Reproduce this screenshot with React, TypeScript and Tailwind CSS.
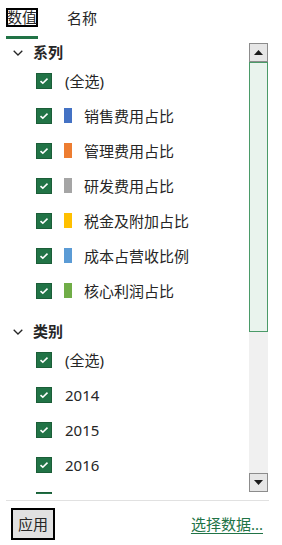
import React from 'react';

interface Item {
  label: string;
  color?: string;
}

const SERIES: Item[] = [
  { label: '(全选)' },
  { label: '销售费用占比', color: 'bg-[#4472c4]' },
  { label: '管理费用占比', color: 'bg-[#ed7d31]' },
  { label: '研发费用占比', color: 'bg-[#a5a5a5]' },
  { label: '税金及附加占比', color: 'bg-[#ffc000]' },
  { label: '成本占营收比例', color: 'bg-[#5b9bd5]' },
  { label: '核心利润占比', color: 'bg-[#70ad47]' },
];

// last row is scrolled mostly out of view; only its checkbox top peeks in
const CATEGORIES: Item[] = [
  { label: '(全选)' },
  { label: '2014' },
  { label: '2015' },
  { label: '2016' },
  { label: '' },
];

function Checkbox() {
  return (
    <span className="flex-shrink-0 w-4 h-4 bg-[#217346] border border-[#1b5e38] flex items-center justify-center">
      <svg width="10" height="8" viewBox="0 0 10 8">
        <path d="M1.5 4.2 L3.8 6.2 L8.5 1.6" fill="none" stroke="white" strokeWidth="1.6" />
      </svg>
    </span>
  );
}

function GroupHeader({ title }: { title: string }) {
  return (
    <div className="h-[21px] flex items-center pl-[13px] gap-[10px]">
      <svg width="10" height="6" viewBox="0 0 10 6">
        <path d="M0.7 0.7 L5 5 L9.3 0.7" fill="none" stroke="#262626" strokeWidth="1.3" />
      </svg>
      <span className="text-[15px] leading-[21px] font-bold text-[#262626]">{title}</span>
    </div>
  );
}

function Row({ item }: { item: Item }) {
  return (
    <div className="h-[35px] flex items-center pl-[36px]">
      <Checkbox />
      {item.color ? (
        <>
          <span className={`ml-[12px] w-[8px] h-[15px] flex-shrink-0 ${item.color}`} />
          <span className="ml-[12px] text-[15px] leading-[20px] text-[#262626] whitespace-nowrap">{item.label}</span>
        </>
      ) : (
        item.label && (
          <span className="ml-[13px] text-[15px] leading-[20px] text-[#262626] whitespace-nowrap">{item.label}</span>
        )
      )}
    </div>
  );
}

export default function App() {
  return (
    <div
      className="w-[282px] h-[545px] bg-white flex flex-col overflow-hidden"
      style={{ fontFamily: '"Noto Sans", "Noto Sans CJK SC", sans-serif' }}
    >
      {/* Tabs */}
      <div className="h-[42px] flex items-start pl-[6px] pt-[8px]">
        <div className="flex flex-col w-[32px]">
          <div className="h-[19px] border-2 border-black flex items-center justify-center overflow-visible">
            <span className="text-[15px] leading-[15px] text-[#262626] whitespace-nowrap">数值</span>
          </div>
          <div className="mt-[9px] h-[3px] bg-[#217346]" />
        </div>
        <span className="ml-[29px] mt-[2px] text-[15px] leading-[17px] text-[#262626] whitespace-nowrap">名称</span>
      </div>

      {/* List + scrollbar */}
      <div className="h-[452px] flex">
        <div className="flex-1 overflow-hidden">
          <GroupHeader title="系列" />
          {SERIES.map((it, i) => (
            <Row key={i} item={it} />
          ))}
          <div className="mt-[13px]">
            <GroupHeader title="类别" />
            {CATEGORIES.map((it, i) => (
              <Row key={i} item={it} />
            ))}
          </div>
        </div>
        <div className="mt-[1px] mr-[14px] w-[19px] h-[449px] flex flex-col bg-[#f0f0f0]">
          <div className="h-[19px] bg-[#e6e6e6] border border-[#8c8c8c] flex items-center justify-center">
            <svg width="9" height="5" viewBox="0 0 9 5">
              <path d="M0 5 L4.5 0 L9 5 Z" fill="#1a1a1a" />
            </svg>
          </div>
          <div className="h-[270px] bg-[#e9f3ed] border border-[#4a9a68]" />
          <div className="flex-1" />
          <div className="h-[19px] bg-[#e6e6e6] border border-[#8c8c8c] flex items-center justify-center">
            <svg width="9" height="5" viewBox="0 0 9 5">
              <path d="M0 0 L9 0 L4.5 5 Z" fill="#1a1a1a" />
            </svg>
          </div>
        </div>
      </div>

      {/* Separator */}
      <div className="mt-[6px] ml-[6px] w-[263px] h-px bg-[#e1e1e1]" />

      {/* Footer */}
      <div className="flex items-center justify-between mt-[7px]">
        <button className="ml-[11px] w-[44px] h-[32px] border-2 border-black bg-[#e1e1e1] text-[15px] leading-[18px] text-[#262626] flex items-center justify-center">
          应用
        </button>
        <a className="mr-[19px] text-[15px] leading-[18px] text-[#217346] underline underline-offset-[3px]">
          选择数据...
        </a>
      </div>
    </div>
  );
}
